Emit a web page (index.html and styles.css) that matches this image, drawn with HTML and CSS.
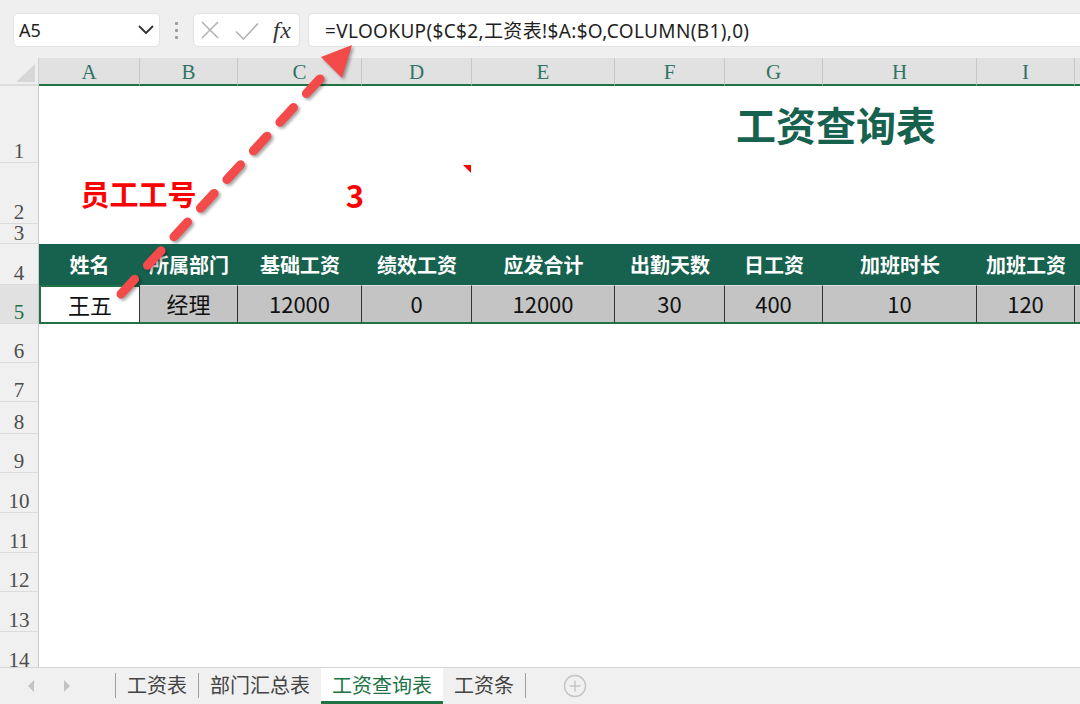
FILE: index.html
```html
<!DOCTYPE html>
<html lang="zh-CN">
<head>
<meta charset="utf-8">
<title>工资查询表</title>
<link rel="stylesheet" href="styles.css">
</head>
<body>
<div class="app">
  <div class="toolbar">
    <div class="namebox">
      <span class="nb-text">A5</span>
      <svg class="chev" width="16" height="10" viewBox="0 0 16 10"><path d="M1.5 1.5 L8 8 L14.5 1.5" fill="none" stroke="#333" stroke-width="1.8" stroke-linecap="round" stroke-linejoin="round"/></svg>
    </div>
    <div class="grip"><i></i><i></i><i></i></div>
    <div class="fnbtns">
      <svg class="ic-x" width="18" height="18" viewBox="0 0 18 18"><path d="M1 1 L17 17 M17 1 L1 17" fill="none" stroke="#b3b3b3" stroke-width="1.6"/></svg>
      <svg class="ic-ok" width="24" height="18" viewBox="0 0 24 18"><path d="M1 9.5 L8.5 17 L23 1.5" fill="none" stroke="#b3b3b3" stroke-width="1.6"/></svg>
      <span class="fx">fx</span>
    </div>
    <div class="formula">=VLOOKUP($C$2,工资表!$A:$O,COLUMN(B1),0)</div>
  </div>

  <div class="sheet">
    <div class="corner"><span class="tri"></span></div>
    <div class="ch">A</div><div class="ch">B</div><div class="ch">C</div><div class="ch">D</div><div class="ch">E</div><div class="ch">F</div><div class="ch">G</div><div class="ch">H</div><div class="ch">I</div><div class="ch last"></div>

    <div class="rh">1</div>
    <div class="cell span-all title-cell"><span class="title">工资查询表</span></div>

    <div class="rh">2</div>
    <div class="cell span2 label">员工工号</div>
    <div class="cell span2 value">3</div>
    <div class="cell span-rest"></div>

    <div class="rh rh-short">3</div>
    <div class="cell span-all"></div>

    <div class="rh">4</div>
    <div class="th">姓名</div><div class="th">所属部门</div><div class="th">基础工资</div><div class="th">绩效工资</div><div class="th">应发合计</div><div class="th">出勤天数</div><div class="th">日工资</div><div class="th">加班时长</div><div class="th">加班工资</div><div class="th"></div>

    <div class="rh rh-sel">5</div>
    <div class="td sel">王五</div><div class="td">经理</div><div class="td">12000</div><div class="td">0</div><div class="td">12000</div><div class="td">30</div><div class="td">400</div><div class="td">10</div><div class="td">120</div><div class="td last"></div>

    <div class="rh">6</div><div class="cell span-all"></div>
    <div class="rh">7</div><div class="cell span-all"></div>
    <div class="rh">8</div><div class="cell span-all"></div>
    <div class="rh">9</div><div class="cell span-all"></div>
    <div class="rh">10</div><div class="cell span-all"></div>
    <div class="rh">11</div><div class="cell span-all"></div>
    <div class="rh">12</div><div class="cell span-all"></div>
    <div class="rh">13</div><div class="cell span-all"></div>
    <div class="rh">14</div><div class="cell span-all"></div>
  </div>

  <div class="tabs">
    <div class="nav"><span class="tl"></span><span class="tr"></span></div>
    <div class="tsep"></div>
    <div class="tab">工资表</div>
    <div class="tsep"></div>
    <div class="tab">部门汇总表</div>
    <div class="tab active">工资查询表</div>
    <div class="tab">工资条</div>
    <div class="tsep"></div>
    <div class="add">
      <svg width="24" height="24" viewBox="0 0 24 24"><circle cx="12" cy="12" r="10.5" fill="none" stroke="#c4c4c4" stroke-width="1.4"/><path d="M12 6.5 V17.5 M6.5 12 H17.5" stroke="#c4c4c4" stroke-width="1.4"/></svg>
    </div>
  </div>

  <svg class="arrow" width="1080" height="704" viewBox="0 0 1080 704">
    <line x1="121" y1="294" x2="330" y2="68" stroke="#f34a4a" stroke-width="9" stroke-dasharray="20 19" stroke-linecap="round"/>
    <polygon points="352,45 321,57 342,78" fill="#f34a4a"/>
  </svg>
</div>
</body>
</html>
```

FILE: styles.css
```css
* { box-sizing: border-box; margin: 0; padding: 0; }
html, body { width: 1080px; height: 704px; overflow: hidden; background: #efefef; }
body { font-family: "Noto Sans", "Noto Sans CJK SC", sans-serif; }
.app { position: relative; width: 1080px; height: 704px; overflow: hidden; }

/* toolbar */
.toolbar { height: 58px; display: flex; align-items: flex-start; padding: 13px 0 0 13px; }
.namebox { width: 147px; height: 34px; background: #fff; border: 1px solid #e3e3e3; border-radius: 5px;
  display: flex; align-items: center; justify-content: space-between; padding: 0 5px 0 5px;
  font-size: 18px; color: #222; }
.nb-text { line-height: 1; }
.grip { width: 33px; height: 34px; display: flex; flex-direction: column; align-items: center; justify-content: center; gap: 4px; }
.grip i { display: block; width: 3px; height: 3px; background: #9b9b9b; border-radius: 1px; }
.fnbtns { width: 107px; height: 34px; background: #fff; border: 1px solid #e3e3e3; border-radius: 5px;
  display: flex; align-items: center; padding-left: 7px; }
.ic-x { margin-right: 16px; }
.ic-ok { margin-right: 14px; margin-top: 1px; }
.fx { font-family: "Liberation Serif", serif; font-style: italic; font-size: 24px; color: #333; line-height: 1; letter-spacing: 0.5px; }
.formula { flex: 1; margin-left: 8px; margin-right: -8px; height: 34px; background: #fff; border: 1px solid #e3e3e3; border-radius: 5px;
  display: flex; align-items: center; padding-left: 16px; font-size: 19px; letter-spacing: 0.35px; color: #1f1f1f; white-space: nowrap; }

/* sheet */
.sheet { height: 609px; overflow: hidden; background: #fff; display: grid;
  grid-template-columns: 39px 101px 98px 124px 110px 143px 110px 98px 154px 98px 1fr;
  grid-template-rows: 28px 77px 61px 20px 41px 39px 39px 39px 32px 39px 40px 40px 39px 40px 40px; }
.corner { position: relative; background: #efefef; border-right: 1px solid #d0d0d0; border-bottom: 2px solid #dcdcdc; }
.tri { position: absolute; right: 3px; bottom: 2px; width: 0; height: 0;
  border-left: 19px solid transparent; border-bottom: 18px solid #d7d7d7; }
.ch { background: #e1e1e1; border-right: 1px solid #c8c8c8; border-bottom: 2px solid #217346;
  font-family: "Liberation Serif", serif; font-size: 21px; color: #2f7464; line-height: 1;
  display: flex; align-items: flex-end; justify-content: center; padding-bottom: 1px; }
.ch.last { border-right: none; }
.rh { background: #f0f0f0; border-right: 1px solid #c9c9c9; border-bottom: 1px solid #dcdcdc;
  font-family: "Liberation Serif", serif; font-size: 21px; color: #4d4d4d; line-height: 0.95;
  display: flex; align-items: flex-end; justify-content: center; }
.rh-short { line-height: 0.85; align-items: center; padding-top: 1px; }
.rh-sel { background: #e1e1e1; color: #217346; }
.cell { background: #fff; display: flex; align-items: center; justify-content: center; }
.span-all { grid-column: 2 / -1; }
.span2 { grid-column: span 2; }
.span-rest { grid-column: span 6; }
.title-cell { justify-content: flex-start; padding-left: 697px; padding-bottom: 2px; }
.title { font-family: "Noto Sans CJK SC", sans-serif; font-weight: 700; font-size: 40px; color: #17614f; line-height: 1; white-space: nowrap; }
.label { font-family: "Noto Sans CJK SC", sans-serif; font-weight: 700; font-size: 29px; color: #ff0000; line-height: 1; }
.value { position: relative; font-family: "Noto Sans CJK SC", sans-serif; font-weight: 700; font-size: 31px; color: #ff0000; line-height: 1; padding-top: 1px; }
.value::after { content: ""; position: absolute; top: 2px; right: 1px; width: 0; height: 0;
  border-left: 8px solid transparent; border-top: 8px solid #ff0000; }
.th { background: #17614f; color: #fff; font-family: "Noto Sans CJK SC", sans-serif; font-weight: 700; font-size: 20px;
  display: flex; align-items: center; justify-content: center; line-height: 1; }
.td { background: #c4c4c4; border-right: 1px solid #333; border-bottom: 2px solid #217346; border-top: 1px solid #e2e2e2;
  font-family: "Noto Sans CJK SC", sans-serif; font-size: 22px; color: #111;
  display: flex; align-items: center; justify-content: center; line-height: 1; padding-bottom: 2px; }
.td.sel { background: #fff; border-left: 2px solid #217346; border-top: 2px solid #217346; }
.td.last { border-right: none; }

/* tabs */
.tabs { height: 37px; background: #f0f0f0; border-top: 1px solid #d5d5d5; display: flex; align-items: stretch; }
.nav { width: 115px; display: flex; align-items: center; padding-left: 28px; gap: 30px; }
.tl, .tr { display: block; width: 0; height: 0; border-top: 6px solid transparent; border-bottom: 6px solid transparent; }
.tl { border-right: 6px solid #c3c3c3; }
.tr { border-left: 6px solid #c3c3c3; }
.tsep { width: 1px; background: #9d9d9d; margin: 5px 0 6px; }
.tab { padding: 0 11px; display: flex; align-items: center; font-family: "Noto Sans CJK SC", sans-serif; font-size: 20px; color: #444; line-height: 1; padding-bottom: 2px; }
.tab.active { background: #fff; color: #217346; border-bottom: 3px solid #217346; padding-bottom: 0; }
.add { display: flex; align-items: center; padding-left: 37px; }

/* annotation arrow */
.arrow { position: absolute; left: 0; top: 0; pointer-events: none; filter: drop-shadow(2px 2px 1.5px rgba(0,0,0,0.35)); }
```
